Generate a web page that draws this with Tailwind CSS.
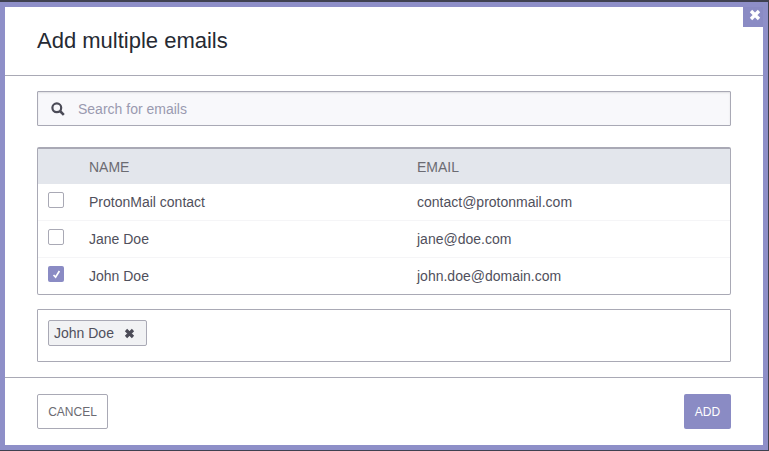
<!DOCTYPE html>
<html lang="en">
<head>
    <meta charset="UTF-8">
    <title>Add multiple emails</title>
    <script src="https://cdn.jsdelivr.net/npm/@tailwindcss/browser@4"></script>
</head>
<body class="bg-[#3f4150] w-[769px] h-[451px] overflow-hidden font-['Liberation_Sans',Arial,sans-serif] text-[#50505c]">
    <div class="relative w-[768px] h-[448px] mt-[2px] bg-white border-[5px] border-[#8e8fc8] flex flex-col">
        <!-- Close -->
        <button class="absolute top-0 right-0 w-5 h-5 pl-1 pb-1 bg-[#8a8bc4] flex items-center justify-center">
            <svg width="12" height="12" viewBox="0 0 12 12"><path d="M2 2 L10 10 M10 2 L2 10" stroke="#fff" stroke-width="3.4"/></svg>
        </button>

        <header class="h-[69px] border-b border-[#a9a9b5] pl-8 pb-[2px] flex items-center shrink-0">
            <h1 class="text-[22px] text-[#262a33]">Add multiple emails</h1>
        </header>

        <main class="flex-1 px-8 pt-[15px]">
            <!-- Search -->
            <div class="h-[35px] border border-[#a9a9b5] rounded-[1px] bg-[#f8f8fb] flex items-center shadow-[inset_0_1px_2px_rgba(0,0,0,0.1)]">
                <svg class="ml-[13px]" width="14" height="14" viewBox="0 0 14 14" fill="none"><circle cx="5.8" cy="5.8" r="4.4" stroke="#4b4b57" stroke-width="2.2"/><path d="M9 9 L12.8 12.8" stroke="#4b4b57" stroke-width="2.6"/></svg>
                <span class="ml-[13px] text-sm text-[#9a9ab0]">Search for emails</span>
            </div>

            <!-- Contacts table -->
            <div class="mt-[21px] h-[148px] border border-[#a9a9b5] border-t-2 rounded-[2px] text-sm">
                <div class="h-[35px] bg-[#e3e6ec] grid grid-cols-[51px_328px_1fr] items-center text-[#6b6b72]">
                    <span></span><span>NAME</span><span>EMAIL</span>
                </div>
                <div class="h-[37px] border-b border-[#f5f5f7] grid grid-cols-[51px_328px_1fr] items-center">
                    <span class="ml-[10px] -mt-1 w-4 h-4 border border-[#a9a9b5] rounded-[2px]"></span>
                    <span>ProtonMail contact</span><span>contact@protonmail.com</span>
                </div>
                <div class="h-[37px] border-b border-[#f5f5f7] grid grid-cols-[51px_328px_1fr] items-center">
                    <span class="ml-[10px] -mt-1 w-4 h-4 border border-[#a9a9b5] rounded-[2px]"></span>
                    <span>Jane Doe</span><span>jane@doe.com</span>
                </div>
                <div class="h-[36px] grid grid-cols-[51px_328px_1fr] items-center">
                    <span class="ml-[10px] -mt-1 w-4 h-4 bg-[#8a8bc4] rounded-[2px] flex items-center justify-center">
                        <svg width="11" height="11" viewBox="0 0 11 11" fill="none"><path d="M2.5 6 L4.6 8.2 L8.4 2" stroke="#fff" stroke-width="1.7"/></svg>
                    </span>
                    <span>John Doe</span><span>john.doe@domain.com</span>
                </div>
            </div>

            <!-- Selected -->
            <div class="mt-[14px] h-[53px] border border-[#a9a9b5] rounded-[1px] pl-[10px] pt-[10px]">
                <span class="inline-flex items-center h-[26px] w-[99px] pl-[5px] bg-[#f1f2f4] border border-[#a9a9b5] rounded-[2px] text-sm">
                    John Doe
                    <svg class="ml-[10px]" width="11" height="11" viewBox="0 0 11 11"><path d="M2 2 L9 9 M9 2 L2 9" stroke="#4b4b57" stroke-width="3.2"/></svg>
                </span>
            </div>
        </main>

        <footer class="h-[68px] border-t border-[#a9a9b5] px-8 flex items-start justify-between pt-[16px] shrink-0">
            <button class="w-[71px] h-[35px] border border-[#a9a9b5] rounded-[2px] text-xs text-[#6b6b72]">CANCEL</button>
            <button class="w-[47px] h-[35px] bg-[#8a8bc4] rounded-[2px] text-xs text-white">ADD</button>
        </footer>
    </div>
</body>
</html>
